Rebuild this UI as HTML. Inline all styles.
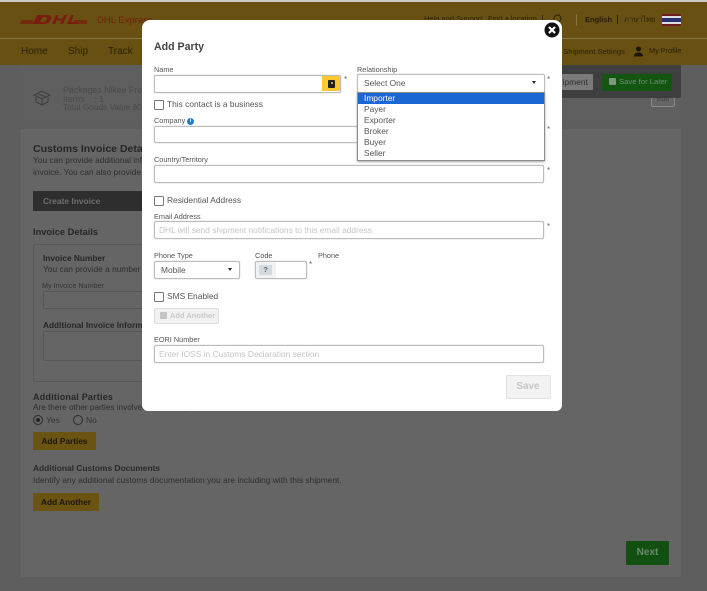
<!DOCTYPE html>
<html><head><meta charset="utf-8">
<style>
html,body{margin:0;padding:0}
body{width:707px;height:591px;overflow:hidden;position:relative;background:#5e5e5e;font-family:"Liberation Sans","Noto Sans CJK JP",sans-serif;color:#3a3a3a}
div{position:absolute;box-sizing:border-box}
#w{left:0;top:0;width:707px;height:591px;overflow:hidden;filter:blur(.35px)}
.t{white-space:nowrap;line-height:12px}
.l{font-size:7.3px;color:#555}
.cb{width:10px;height:10px;border:1px solid #777;border-radius:1.5px;background:#fff}
.in{border:1px solid #bdbdbd;border-radius:2px;background:#fff;box-shadow:0 0 1px #aaa}
.ph{font-size:8.4px;color:#c4c4c4}
.y{background:#6b5412;border-radius:1px;color:#1c1705;font-weight:bold;font-size:8.3px;text-align:center}
</style></head><body>
<div id="w">
<div class="t" style="left:64px;top:59px;font-size:8.500px;color:#4a4a4a">Hassans</div>
<div style="left:0;top:0;width:707px;height:2px;background:#c9c9c4"></div>
<div style="left:0;top:2px;width:707px;height:36px;background:#675012"></div>
<div style="left:0;top:38px;width:707px;height:1px;background:#857743"></div>
<div style="left:0;top:39px;width:707px;height:26px;background:#675012"></div>

<div style="left:21px;top:65px;width:660px;height:56px;background:#5f5f5f"></div>
<div style="left:21px;top:129px;width:660px;height:448px;background:#656565"></div>

<!-- DHL logo -->
<svg style="position:absolute;left:20px;top:13px" width="68" height="12" viewBox="0 0 68 12">
<path d="M1 8h12M0 10h14M54 8h13M53 10h14" stroke="#7a1d10" stroke-width="1.400"/>
<path d="M13 11L17 2h11c4 0 4 3 2 6s-4 3-7 3zM20 9h3c2 0 3-1 4-3 0-2-1-2-2-2h-2zM32 11l4-9h3l-1.500 3.500h5L44 2h3l-4 9h-3l1.500-3.500h-5L35 11zM47 11l4-9h3l-3 7h6l-1 2z" fill="#7a1d10" fill-rule="evenodd"/>
</svg>
<div class="t" style="left:97px;top:15px;font-size:9.500px;color:#7a1d10">DHL Express</div>
<div class="t" style="left:424px;top:13px;font-size:7.500px;color:#2c2408">Help and Support</div>
<div class="t" style="left:488px;top:13px;font-size:7.500px;color:#2c2408">Find a location</div>
<div style="left:542px;top:15px;width:1px;height:8px;background:#3c300a"></div>
<svg style="position:absolute;left:552px;top:13px" width="12" height="12" viewBox="0 0 12 12" fill="none" stroke="#2c2408" stroke-width="1"><circle cx="5.500" cy="5.500" r="3.500"/></svg>
<div style="left:576px;top:14px;width:1px;height:12px;background:#85763f"></div>
<div class="t" style="left:585px;top:14px;font-size:7.500px;font-weight:bold;color:#241d06">English</div>
<div style="left:617px;top:15px;width:1px;height:9px;background:#2c2408"></div>
<div class="t" style="left:624px;top:14px;font-size:7.500px;color:#2c2408">ภาษาไทย</div>
<div style="left:662px;top:14px;width:19px;height:12px;background:linear-gradient(#6f1a22 0 17%,#ddd 17% 33%,#2a2f70 33% 67%,#ddd 67% 83%,#6f1a22 83%)"></div>

<div class="t" style="left:21px;top:46px;font-size:10px;color:#2a2208">Home</div>
<div class="t" style="left:68px;top:46px;font-size:10px;color:#2a2208">Ship</div>
<div class="t" style="left:108px;top:46px;font-size:10px;color:#2a2208">Track</div>
<div class="t" style="left:551px;top:46px;font-size:7.600px;color:#2a2208">My Shipment Settings</div>
<svg style="position:absolute;left:633px;top:46px" width="11" height="11" viewBox="0 0 11 11"><circle cx="5.500" cy="3" r="2.500" fill="#1c1705"/><path d="M1 10.500c0-3 2-4 4.500-4s4.500 1 4.500 4z" fill="#1c1705"/></svg>
<div class="t" style="left:649px;top:45px;font-size:7.300px;color:#2a2208">My Profile</div>

<!-- dark bar right -->
<div style="left:560px;top:65px;width:121px;height:33px;background:#3f3f3f"></div>
<div style="left:555px;top:74px;width:38px;height:16px;background:#7a7a7a;border-radius:1px"></div>
<div class="t" style="left:545px;top:75.500px;width:43px;text-align:right;font-size:8.500px;color:#2e2e2e">ipment</div>
<div style="left:602px;top:74px;width:70px;height:17px;background:#125612;border-radius:1px"></div>
<div style="left:609px;top:78px;width:7px;height:7px;background:#7f967f;border-radius:1px"></div>
<div class="t" style="left:619px;top:75.500px;font-size:7.700px;color:#6f8e6f">Save for Later</div>
<div style="left:651px;top:98px;width:24px;height:9px;border:1px solid #8a8a8a;border-top:none;border-radius:0 0 2px 2px;background:#666"></div>
<div class="t" style="left:651px;top:94px;width:24px;text-align:center;font-size:7px;color:#3e3e3e">Edit</div>

<!-- package summary -->
<svg style="position:absolute;left:33px;top:90px" width="18" height="16" viewBox="0 0 18 16" fill="none" stroke="#3e3e3e" stroke-width="1"><path d="M1 5l8-4 8 4-8 4zM3 7v5l6 3 6-3V7M9 9v6"/><path d="M5 4l8 3" /></svg>
<div class="t" style="left:63px;top:84px;font-size:8.800px;color:#4a4a4a">Packages Nikee Fre</div>
<div class="t" style="left:63px;top:93px;font-size:8.800px;color:#4a4a4a;white-space:pre">Items    : 1</div>
<div class="t" style="left:63px;top:101px;font-size:8.300px;color:#4a4a4a">Total Goods Value 80</div>

<!-- customs section -->
<div class="t" style="left:33px;top:143px;font-size:10.500px;font-weight:bold;color:#262626">Customs Invoice Details</div>
<div class="t" style="left:33px;top:154px;font-size:8.400px;color:#2e2e2e">You can provide additional information</div>
<div class="t" style="left:33px;top:166px;font-size:8.400px;color:#2e2e2e">invoice. You can also provide</div>
<div style="left:33px;top:191px;width:110px;height:20px;background:#2e2e2e"></div>
<div class="t" style="left:43px;top:194.500px;font-size:8.400px;font-weight:bold;color:#6e6e6e">Create Invoice</div>
<div class="t" style="left:33px;top:226px;font-size:9.300px;font-weight:bold;color:#262626">Invoice Details</div>
<div style="left:33px;top:244px;width:120px;height:138px;border:1px solid #585858;border-radius:2px"></div>
<div class="t" style="left:43px;top:252px;font-size:8.300px;font-weight:bold;color:#262626">Invoice Number</div>
<div class="t" style="left:43px;top:263px;font-size:8.400px;color:#2e2e2e">You can provide a number</div>
<div class="t" style="left:42px;top:280px;font-size:7.200px;color:#333">My Invoice Number</div>
<div style="left:43px;top:291px;width:110px;height:18px;border:1px solid #555;border-radius:2px"></div>
<div class="t" style="left:43px;top:319px;font-size:8.300px;font-weight:bold;color:#262626">Additional Invoice Information</div>
<div style="left:43px;top:331px;width:110px;height:30px;border:1px solid #555;border-radius:2px"></div>

<div class="t" style="left:33px;top:391px;font-size:9px;font-weight:bold;color:#262626;letter-spacing:.2px">Additional Parties</div>
<div class="t" style="left:33px;top:402px;font-size:8.200px;color:#2e2e2e">Are there other parties involved in this shipment?</div>
<div style="left:33px;top:415px;width:10px;height:10px;border:1px solid #2a2a2a;border-radius:50%"></div>
<div style="left:36px;top:418px;width:4px;height:4px;background:#222;border-radius:50%"></div>
<div class="t" style="left:46px;top:414px;font-size:8.500px;color:#333">Yes</div>
<div style="left:73px;top:415px;width:10px;height:10px;border:1px solid #2a2a2a;border-radius:50%"></div>
<div class="t" style="left:86px;top:414px;font-size:8.500px;color:#333">No</div>
<div class="y" style="left:33px;top:432px;width:63px;height:18px;line-height:18px">Add Parties</div>
<div class="t" style="left:33px;top:462px;font-size:8.400px;font-weight:bold;color:#2a2a2a">Additional Customs Documents</div>
<div class="t" style="left:33px;top:474px;font-size:8.400px;color:#2e2e2e">Identify any additional customs documentation you are including with this shipment.</div>
<div class="y" style="left:33px;top:493px;width:66px;height:18px;line-height:18px">Add Another</div>
<div style="left:626px;top:541px;width:43px;height:24px;background:#125012;border-radius:1px;color:#6d8a6d;font-weight:bold;font-size:10px;text-align:center;line-height:24px">Next</div>

<!-- modal -->
<div style="left:142px;top:20px;width:420px;height:391px;background:#fff;border-radius:8px 8px 6px 6px"></div>
<div class="t" style="left:154px;top:41px;font-size:10.600px;font-weight:bold;color:#444">Add Party</div>
<svg style="position:absolute;left:544px;top:22px" width="16" height="16" viewBox="0 0 16 16"><circle cx="8" cy="8" r="7.500" fill="#111"/><path d="M5 5l6 6M11 5l-6 6" stroke="#fff" stroke-width="2.200"/></svg>

<div class="t l" style="left:154px;top:64px">Name</div>
<div class="in" style="left:154px;top:75px;width:187px;height:18px"></div>
<div style="left:322px;top:76px;width:18px;height:15px;background:#fdc92f"></div>
<div style="left:328px;top:79.500px;width:7px;height:8px;background:#222;border-radius:1px"></div>
<div style="left:330.500px;top:82px;width:2px;height:2px;background:#fdc92f;border-radius:50%"></div>
<div class="t" style="left:344px;top:74px;font-size:8px;color:#666">*</div>
<div class="cb" style="left:154px;top:100px"></div>
<div class="t" style="left:167px;top:98px;font-size:8.400px;color:#555">This contact is a business</div>
<div class="t l" style="left:154px;top:115px">Company</div>
<div style="left:187px;top:117.500px;width:7px;height:7px;border-radius:50%;background:#1c7fd0;color:#fff;font-size:5px;line-height:7px;text-align:center;font-weight:bold">i</div>
<div class="in" style="left:154px;top:126px;width:204px;height:17px"></div>
<div class="t l" style="left:154px;top:154px">Country/Territory</div>
<div class="in" style="left:154px;top:165px;width:390px;height:18px"></div>
<div class="t" style="left:547px;top:165px;font-size:8px;color:#666">*</div>
<div class="t" style="left:547px;top:124px;font-size:8px;color:#666">*</div>

<div class="cb" style="left:154px;top:196px"></div>
<div class="t" style="left:167px;top:194px;font-size:8.400px;color:#555">Residential Address</div>
<div class="t l" style="left:154px;top:211px">Email Address</div>
<div class="in" style="left:154px;top:221px;width:390px;height:18px"></div>
<div class="t ph" style="left:159px;top:224px">DHL will send shipment notifications to this email address</div>
<div class="t" style="left:547px;top:221px;font-size:8px;color:#666">*</div>

<div class="t l" style="left:154px;top:250px">Phone Type</div>
<div class="t l" style="left:255px;top:250px">Code</div>
<div class="t l" style="left:318px;top:250px">Phone</div>
<div class="in" style="left:154px;top:261px;width:86px;height:18px"></div>
<div class="t" style="left:161px;top:263.500px;font-size:8.400px;color:#555">Mobile</div>
<div style="left:228px;top:268px;width:0;height:0;border:2px solid transparent;border-top:3px solid #222;border-bottom:none"></div>
<div class="in" style="left:255px;top:261px;width:52px;height:18px"></div>
<div style="left:256px;top:262px;width:20px;height:16px;background:#f1f1f1"></div>
<div style="left:259px;top:264.500px;width:13px;height:10px;background:#d5dadf;color:#666;font-size:7.500px;font-weight:bold;text-align:center;line-height:10px">?</div>
<div class="t" style="left:309px;top:259px;font-size:8px;color:#666">*</div>

<div class="cb" style="left:154px;top:292px"></div>
<div class="t" style="left:167px;top:290px;font-size:8.400px;color:#555">SMS Enabled</div>
<div style="left:154px;top:308px;width:65px;height:16px;background:#f1f1f1;border:1px solid #ddd;border-radius:2px"></div>
<div style="left:160px;top:312px;width:7px;height:7px;background:#c4c4c4;border-radius:1px"></div>
<div class="t" style="left:170px;top:310px;font-size:7.500px;font-weight:bold;color:#c9c9c9">Add Another</div>
<div class="t l" style="left:154px;top:334px">EORI Number</div>
<div class="in" style="left:154px;top:345px;width:390px;height:18px"></div>
<div class="t ph" style="left:159px;top:348px">Enter IOSS in Customs Declaration section</div>
<div style="left:505.500px;top:375px;width:45px;height:24px;background:#f2f2f2;border:1px solid #e2e2e2;border-radius:2px;color:#c6c6c6;font-weight:bold;font-size:10px;text-align:center;line-height:22px">Save</div>

<!-- relationship -->
<div class="t l" style="left:357px;top:64px">Relationship</div>
<div class="in" style="left:357px;top:74px;width:188px;height:19px"></div>
<div class="t" style="left:364px;top:77px;font-size:8.400px;color:#555">Select One</div>
<div style="left:532px;top:81px;width:0;height:0;border:2px solid transparent;border-top:3px solid #222;border-bottom:none"></div>
<div class="t" style="left:547px;top:74px;font-size:8px;color:#666">*</div>
<div style="left:357px;top:92px;width:188px;height:69px;background:#fff;border:1px solid #8c8c8c;box-shadow:0 1px 2px rgba(0,0,0,.35)"></div>
<div style="left:358px;top:93px;width:186px;height:11px;background:#1a66d4"></div>
<div class="t" style="left:364px;top:92px;font-size:8.400px;color:#fff">Importer</div>
<div class="t" style="left:364px;top:103px;font-size:8.400px;color:#555">Payer</div>
<div class="t" style="left:364px;top:114px;font-size:8.400px;color:#555">Exporter</div>
<div class="t" style="left:364px;top:125px;font-size:8.400px;color:#555">Broker</div>
<div class="t" style="left:364px;top:136px;font-size:8.400px;color:#555">Buyer</div>
<div class="t" style="left:364px;top:147px;font-size:8.400px;color:#555">Seller</div>
</div>
</body></html>
